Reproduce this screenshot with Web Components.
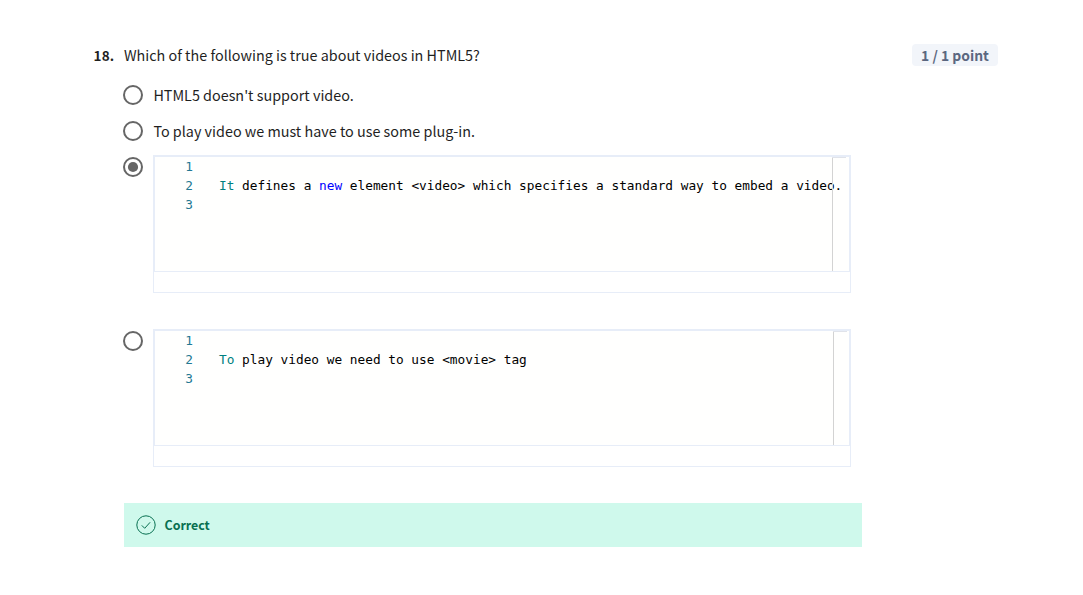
<!DOCTYPE html>
<html lang="en"><head><meta charset="utf-8"><title>Quiz question</title>
<style>
body{margin:0;background:#fff;color:#1f1f1f;font:14.36px/24px "Noto Sans CJK SC","Open Sans",sans-serif}
</style></head><body>
<quiz-question number="18.">
<span slot="prompt">Which of the following is true about videos in HTML5?</span>
<point-badge slot="points">1 / 1 point</point-badge>
<quiz-option>HTML5 doesn't support video.</quiz-option>
<quiz-option>To play video we must have to use some plug-in.</quiz-option>
<quiz-option code checked><code-view style="--ruler:677px"><code-token type="name">It</code-token> defines a <code-token type="keyword">new</code-token> element &lt;video&gt; which specifies a standard way to embed a video.</code-view></quiz-option>
<quiz-option code><code-view style="--ruler:678px"><code-token type="name">To</code-token> play video we need to use &lt;movie&gt; tag</code-view></quiz-option>
<quiz-feedback slot="feedback">Correct</quiz-feedback>
</quiz-question>
<script>
const define=(name,html)=>customElements.define(name,class extends HTMLElement{
 constructor(){super();this.attachShadow({mode:'open'}).innerHTML=html;}
 connectedCallback(){const n=this.shadowRoot.querySelector('.number');if(n)n.textContent=this.getAttribute('number');}
});
define('quiz-question',`<style>
:host{display:block;padding:43px 85px 0 93px}
header{display:grid;grid-template-columns:31px 1fr auto;height:24px}
.number{font-weight:700;font-size:13.5px;letter-spacing:.2px;padding-left:.5px}
.body{margin:16px 0 0 30px;width:739px}
.feedback{padding-left:1px}
</style><header><span class="number"></span><span><slot name="prompt"></slot></span><slot name="points"></slot></header>
<div class="body"><slot></slot><div class="feedback"><slot name="feedback"></slot></div></div>`);
define('point-badge',`<style>:host{display:block;box-sizing:border-box;width:86px;height:22px;margin-top:1px;border-radius:4px;background:#f2f5fa;color:#5b6780;font-weight:700;font-size:13.9px;line-height:22px;text-align:center;white-space:nowrap}</style><slot></slot>`);
define('quiz-option',`<style>
:host{display:flex;gap:10px;height:24px;margin-bottom:12px}
:host([code]){height:138px;margin-bottom:36px}
svg{display:block;width:20px;height:20px;flex:none;margin-top:2px}
circle{fill:none;stroke:#666;stroke-width:2}.dot{display:none;fill:#666;stroke:none}:host([checked]) .dot{display:block}
.content{white-space:nowrap}
:host(:not([code])) .content{padding-left:.4px}
</style><svg viewBox="0 0 20 20"><circle cx="10" cy="10" r="9"/><circle class="dot" cx="10" cy="10" r="5.1"/></svg><div class="content"><slot></slot></div>`);
define('code-view',`<style>
:host{display:block;box-sizing:border-box;width:698px;height:138px;border:1px solid #e7edf8;background:#fff}
.editor{box-sizing:border-box;position:relative;width:696px;height:116px;border:1px solid #e7edf8;background:#fffffe;color:#000;font:12.79px/19px "DejaVu Sans Mono",monospace}
.line{display:grid;grid-template-columns:38px 26px 1fr;height:19px}
.n{color:#237893;text-align:right}.source{grid-column:3;white-space:pre}
.ruler{position:absolute;left:var(--ruler);top:0;width:1px;height:100%;background:#d3d3d3}
.edge{position:absolute;left:var(--ruler);top:0;width:14px;height:1px;background:#e0e3ea}
</style><div class="editor"><div class="line"><span class="n">1</span></div><div class="line"><span class="n">2</span><span class="source"><slot></slot></span></div><div class="line"><span class="n">3</span></div><i class="ruler"></i><i class="edge"></i></div>`);
define('code-token',`<style>:host{display:inline}:host([type=name]){color:#008080}:host([type=keyword]){color:#00f}</style><slot></slot>`);
define('quiz-feedback',`<style>
:host{display:flex;align-items:center;box-sizing:border-box;width:738px;height:44px;padding-left:12px;gap:8.5px;background:#cff9ec;color:#087051;font-weight:700;font-size:12.4px}
svg{width:20px;height:20px}
</style><svg viewBox="0 0 20 20" fill="none" stroke="currentColor"><circle cx="10" cy="10" r="9.2"/><path d="M5.8 10.4l2.9 2.9 5.4-6"/></svg><span><slot></slot></span>`);
</script></body></html>
